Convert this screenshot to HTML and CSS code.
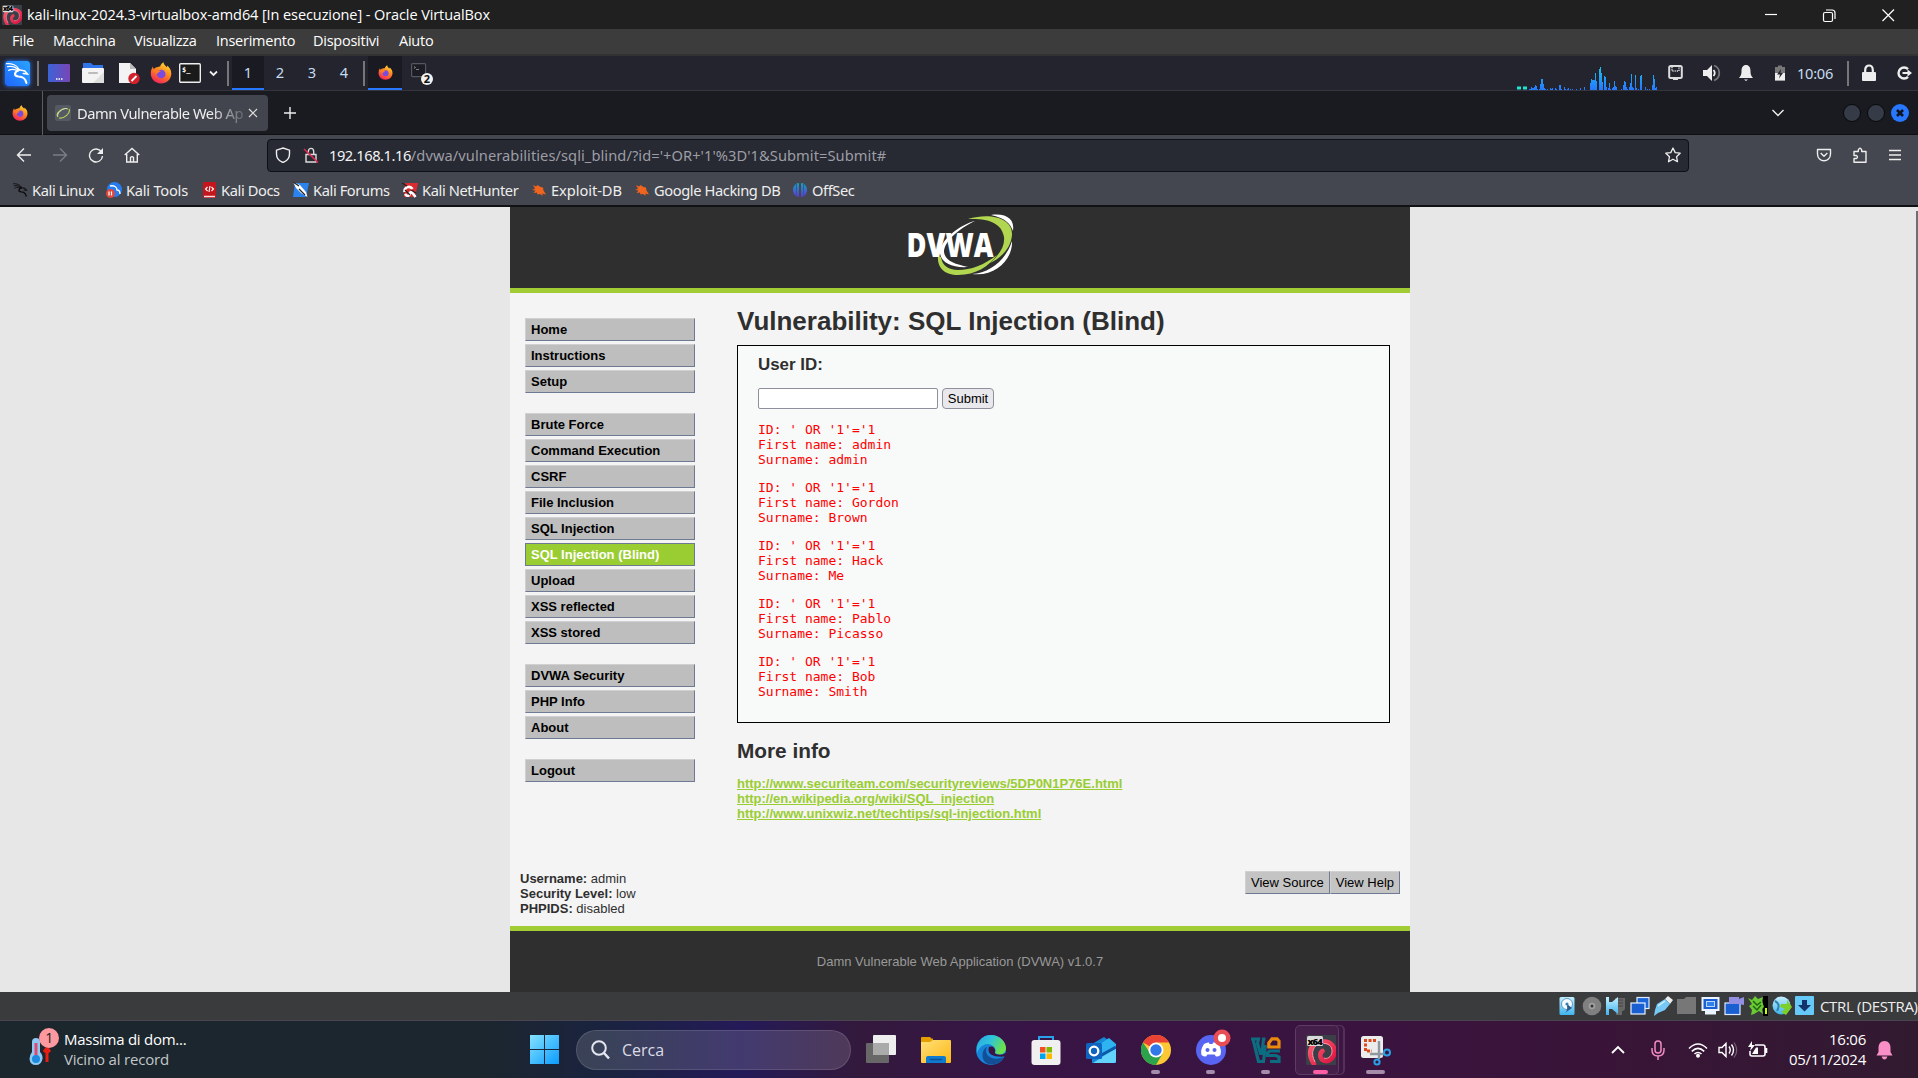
FILE: index.html
```html
<!DOCTYPE html>
<html lang="it">
<head>
<meta charset="utf-8">
<title>kali-linux-2024.3-virtualbox-amd64 [In esecuzione] - Oracle VirtualBox</title>
<link rel="stylesheet" href="styles.css">
</head>
<body>
<svg width="0" height="0" class="defs">
<defs>
<linearGradient id="ffg" x1=".8" y1="0" x2=".3" y2="1"><stop offset="0" stop-color="#ffe03a"/><stop offset=".45" stop-color="#ff8a1e"/><stop offset="1" stop-color="#f4225c"/></linearGradient>
<linearGradient id="desk" x1="0" x2="1"><stop offset="0" stop-color="#3b63d8"/><stop offset="1" stop-color="#7a45b5"/></linearGradient>
<linearGradient id="kg" x1="1" y1="0" x2="0" y2="1"><stop offset="0" stop-color="#2aa3ff"/><stop offset="1" stop-color="#1f67ff"/></linearGradient>
<linearGradient id="cpu" gradientUnits="userSpaceOnUse" x1="0" y1="0" x2="0" y2="24"><stop offset="0" stop-color="#18c8ee"/><stop offset="1" stop-color="#2678ff"/></linearGradient>
<linearGradient id="win" x1="0" y1="0" x2="1" y2="1"><stop offset="0" stop-color="#86e2ff"/><stop offset="1" stop-color="#0a9cff"/></linearGradient>
<linearGradient id="fold" x1="0" y1="0" x2="1" y2="1"><stop offset="0" stop-color="#ffe07a"/><stop offset="1" stop-color="#fcb813"/></linearGradient>
<linearGradient id="edge" x1="0" y1="0" x2="1" y2=".4"><stop offset="0" stop-color="#2ba5e0"/><stop offset=".5" stop-color="#2fc3dd"/><stop offset="1" stop-color="#6be04c"/></linearGradient>
<linearGradient id="aq" x1="0" y1="0" x2="0" y2="1"><stop offset="0" stop-color="#c4eeff"/><stop offset="1" stop-color="#3fb4ee"/></linearGradient>
<linearGradient id="off" x1="0" y1="0" x2="0" y2="1"><stop offset="0" stop-color="#16a3b8"/><stop offset="1" stop-color="#6236d9"/></linearGradient>
<linearGradient id="deb" x1="0" y1="0" x2="1" y2="1"><stop offset="0" stop-color="#ff5f74"/><stop offset="1" stop-color="#d90f3c"/></linearGradient>
<symbol id="firefox" viewBox="0 0 22 22"><path d="M11 21.5C5 21.5.8 17 .8 11.6.8 8 2 6 3 4.6c0 1.2.3 1.8.8 2.3C5.200 5.500 6.500 5 7.500 5.200 8.500 4.500 9.500 4.500 10 4.700 10.500 2.500 12 .8 13.500.2c.2 2.600 2 3.400 3.500 5 .2-.6.1-1.200 0-1.700C19.500 5.500 21.500 8 21.300 12 21 17.500 16.600 21.500 11 21.500Z" fill="url(#ffg)"/><circle cx="11.200" cy="12" r="4.300" fill="#7a4be0"/><path d="M3 8c3-1.500 6 .2 8 1.200-1.500.8-3 .8-3.500 2.300C5 11.500 3.500 10 3 8Z" fill="#ff7a26"/></symbol>
<symbol id="dragon" viewBox="0 0 24 24"><g fill="none" stroke="currentColor" stroke-linecap="round"><path d="M1.500 2.500C6 2 12 4 13.500 8M2.500 5.500C6.500 4.500 10.500 6 13.500 9M3.500 9C7 7 10 8 13 9.500" stroke-width="1.200"/><path d="M13 8.500C8.500 11 8.500 14.500 13 14.800 17.500 15 19.500 16.500 20.500 21" stroke-width="2"/><path d="M13.500 8.500 19 9.500 21.500 12.500 17.500 12" stroke-width="1.500"/></g></symbol>
<symbol id="bug" viewBox="0 0 16 16"><path d="M2 3 5 4.500 6.500 3 9.500 5 12 5.500 12.500 8.500 15 12.500 11 11.500 12 14 9 12 6.500 12.500 6 10.500 2.500 11 4.500 8.500 1 8 4 6.800Z" fill="#f0641e"/></symbol>
<symbol id="debian" viewBox="0 0 30 30"><rect width="30" height="30" rx="1" fill="#3a3f48"/><path d="M8 29C1 19 4 8 14 6.500 23 5.500 29 10 28.500 17 28 24 22 27.500 17.500 25.500 13.500 23.500 13.500 18 16.500 16" fill="none" stroke="url(#deb)" stroke-width="4.600" stroke-linecap="round"/><path d="M9 27C4 18 7 10 15 8.500 22 7.500 26.500 11 26 17 25.500 22 21 24.500 18 23" fill="none" stroke="#ff97a8" stroke-width="1"/><rect x="1" y="1" width="16" height="10" rx="1.500" fill="#d9d9d9"/><text x="1.500" y="9.600" font-family="Open Sans, sans-serif" font-size="9.500" font-weight="800" textLength="15">x64</text></symbol>
</defs>
</svg>

<header class="titlebar">
  <svg class="title-icon" width="20" height="20"><use href="#debian"/></svg>
  <span class="title">kali-linux-2024.3-virtualbox-amd64 [In esecuzione] - Oracle VirtualBox</span>
  <svg class="winbtns" width="132" height="20" fill="none" stroke="#fff" stroke-width="1.200"><path d="M0 9.500H12"/><path d="M58.500 9Q58.500 7.500 60 7.500H66Q67.500 7.500 67.500 9V15Q67.500 16.500 66 16.500H60Q58.500 16.500 58.500 15ZM61 5H67Q70 5 70 8V14"/><path d="M117.500 4.500 129 16M129 4.500 117.500 16"/></svg>
</header>

<nav class="menubar">
  <span>File</span><span>Macchina</span><span>Visualizza</span><span>Inserimento</span><span>Dispositivi</span><span>Aiuto</span>
</nav>

<div class="panel">
  <div class="launchers">
    <svg class="kali" width="25" height="25" viewBox="0 0 24 24" color="#fff"><rect width="24" height="24" rx="2" fill="url(#kg)"/><use href="#dragon"/></svg>
    <i class="sep"></i>
    <svg width="22" height="20"><rect y="1" width="22" height="18" rx="1" fill="url(#desk)"/><path d="M8 16h1.500M10.500 16h1.500M13 16h1.500" stroke="#fff" stroke-width="1.500"/></svg>
    <svg width="22" height="20"><path d="M1 0H9L11 2H21V8H1Z" fill="#2f74e8"/><rect y="5" width="22" height="15" rx="1" fill="#f3f3f3"/><path d="M22 9V20H11Z" fill="#ddd"/><path d="M7 10h8" stroke="#bbb" stroke-width="2" stroke-linecap="round"/></svg>
    <svg width="21" height="22"><path d="M0 1H11L17 7V21H0Z" fill="#f3f3f3"/><path d="M11 1V7H17Z" fill="#bbb"/><circle cx="15" cy="16.500" r="5.700" fill="#d3222c"/><path d="M12.500 19 17.500 14" stroke="#fff" stroke-width="1.800"/></svg>
    <svg width="22" height="22"><use href="#firefox"/></svg>
    <svg width="22" height="20"><rect x=".7" y=".7" width="20.600" height="18.600" rx="1" fill="#1a1a1a" stroke="#eee" stroke-width="1.400"/><text x="3" y="9" font-family="DejaVu Sans Mono, monospace" font-size="7" font-weight="700" fill="#fff">$_</text></svg>
    <svg width="9" height="20"><path d="M1 8.500 4.500 12 8 8.500" fill="none" stroke="#eee" stroke-width="1.800"/></svg>
    <i class="sep"></i>
  </div>
  <div class="spaces"><span class="on">1</span><span>2</span><span>3</span><span>4</span></div>
  <i class="sep"></i>
  <div class="task on"><svg width="15" height="15"><use href="#firefox"/></svg></div>
  <svg class="term2" width="22" height="26"><rect x=".6" y="1.600" width="14" height="13" rx="1" fill="#1c1d24" stroke="#55575e" stroke-width="1.200"/><path d="M3 4.500 4.500 5.500 3 6.500M5 7.500h3" stroke="#999" stroke-width=".8" fill="none"/><circle cx="16" cy="17" r="6" fill="#f2f2f2"/><text x="16" y="21" text-anchor="middle" font-family="Noto Sans, sans-serif" font-size="11" font-weight="700" fill="#111">2</text></svg>
  <svg class="graph" width="141" height="24"><path d="M0 20.500h4v3h-4zM6 20.500h4v3h-4z" fill="#1fe6d2"/><path stroke="url(#cpu)" stroke-width="1" d="M12.500 24v-1M13.500 24v-1M14.500 24v-3M15.500 24v-2M16.500 24v-2M17.500 24v-3M18.500 24v-5M19.500 24v-4M20.500 24v-1M22.500 24v-1M23.500 24v-6M24.500 24v-11M25.500 24v-11M26.500 24v-6M27.500 24v-2M28.500 24v-1M30.500 24v-1M33.500 24v-2M34.500 24v-1M35.500 24v-2M38.500 24v-2M39.500 24v-1M42.500 24v-5M43.500 24v-5M44.500 24v-1M47.500 24v-3M48.500 24v-1M50.500 24v-1M51.500 24v-2M53.500 24v-1M55.500 24v-1M59.500 24v-1M63.500 24v-2M67.500 24v-3M73.500 24v-7M74.500 24v-11M75.500 24v-10M76.500 24v-10M77.500 24v-10M78.500 24v-17M79.500 24v-9M82.500 24v-21M83.500 24v-23M84.500 24v-17M85.500 24v-8M87.500 24v-14M88.500 24v-13M89.500 24v-3M91.500 24v-2M92.500 24v-7M93.500 24v-1M95.500 24v-2M96.500 24v-3M97.500 24v-9M98.500 24v-4M99.500 24v-3M104.500 24v-1M106.500 24v-5M107.500 24v-9M108.500 24v-8M109.500 24v-3M110.500 24v-1M112.500 24v-3M113.500 24v-7M114.500 24v-16M115.500 24v-3M116.500 24v-2M118.500 24v-15M119.500 24v-2M121.500 24v-1M123.500 24v-14M124.500 24v-15M128.500 24v-3M130.500 24v-1M132.500 24v-1M135.500 24v-5M136.500 24v-15M137.500 24v-11M138.500 24v-2M139.500 24v-3"/></svg>
  <div class="tray">
    <svg width="16" height="18"><rect x="1.200" y="2" width="12.600" height="12" rx="1.500" fill="none" stroke="#ddd" stroke-width="2"/><path d="M4 3v4h7V3" fill="none" stroke="#ddd" stroke-width="1.400" stroke-dasharray="1.200 1"/><path d="M5 15h5" stroke="#ddd" stroke-width="2"/></svg>
    <svg width="18" height="18"><path d="M0 6H4L9 1V17L4 12H0Z" fill="#eee"/><path d="M10.500 6Q13 9 10.500 12" fill="none" stroke="#eee" stroke-width="1.800"/><path d="M11 1.500C18 4 18 14 11 16.500" fill="none" stroke="#777" stroke-width="1.800"/></svg>
    <svg width="14" height="18"><path d="M7 1C10 1 11.500 3.500 11.500 7 11.500 11 12.500 12 14 14H0C1.500 12 2.500 11 2.500 7 2.500 3.500 4 1 7 1ZM5 15.500h4L7 17Z" fill="#eee"/></svg>
    <svg width="10" height="18"><path d="M0 3H3V1.500H7V3H10V16.500H0Z" fill="#777"/><path d="M0 9H10V16.500H0Z" fill="#eee"/><path d="M6 5 2 10.500H5L4 14.500 8 9H5.500Z" fill="#23242c"/></svg>
    <span class="clock">10:06</span>
    <i class="sep"></i>
    <svg width="14" height="18"><rect y="8" width="14" height="9" rx="1" fill="#eee"/><path d="M3.200 9V6C3.200 0 10.800 0 10.800 6V9" fill="none" stroke="#eee" stroke-width="2.200"/></svg>
    <svg width="15" height="18"><path d="M11 5.200A5.500 5.500 0 1 0 11 12.800" fill="none" stroke="#eee" stroke-width="2.400"/><path d="M5.500 9H12" stroke="#eee" stroke-width="2"/><path d="M10.500 5.500 15 9 10.500 12.500Z" fill="#eee"/></svg>
  </div>
</div>

<div class="tabs">
  <div class="pin"><svg width="16" height="16"><use href="#firefox"/></svg></div>
  <div class="tab">
    <svg width="16" height="16"><rect width="16" height="16" rx="2" fill="#555961"/><path d="M3 12C0 8 8 2 13 4M4 13C9 14 16 8 14 4" fill="none" stroke="#b4d05a" stroke-width="1.200"/><path d="M2.500 11C3 6 9 3 12 3.500" fill="none" stroke="#ddd" stroke-width=".8"/></svg>
    <span class="tabname">Damn Vulnerable Web Ap</span>
    <svg width="10" height="10"><path d="M1 1 9 9M9 1 1 9" stroke="#ddd" stroke-width="1.200"/></svg>
  </div>
  <svg class="plus" width="14" height="14"><path d="M7 1V13M1 7H13" stroke="#eee" stroke-width="1.400"/></svg>
  <svg class="down" width="14" height="8"><path d="M1.500 1 7 6.500 12.500 1" fill="none" stroke="#eee" stroke-width="1.400"/></svg>
  <i class="dot"></i><i class="dot"></i>
  <svg class="close" width="18" height="18"><circle cx="9" cy="9" r="9" fill="#2777ff"/><path d="M6 6 12 12M12 6 6 12" stroke="#10131c" stroke-width="2.600"/></svg>
</div>

<div class="browserbar">
  <div class="toolbar">
    <div class="navbtns">
      <svg width="16" height="16"><path d="M15 8H1.500M8 1.500 1.500 8 8 14.500" fill="none" stroke="#eee" stroke-width="1.400"/></svg>
      <svg width="16" height="16"><path d="M1 8H14.500M8 1.500 14.500 8 8 14.500" fill="none" stroke="#7b7d83" stroke-width="1.400"/></svg>
      <svg width="16" height="16"><path d="M13.500 5A6.500 6.500 0 1 0 14.500 9" fill="none" stroke="#eee" stroke-width="1.400"/><path d="M15 1V7H9Z" fill="#eee"/></svg>
      <svg width="16" height="16"><path d="M.7 8 8 1.500 15.300 8M2.700 7V15H13.300V7M6.500 15V10.500Q8 8.800 9.500 10.500V15" fill="none" stroke="#eee" stroke-width="1.400"/></svg>
    </div>
    <div class="url">
      <svg width="16" height="16"><path d="M8 1 14.500 3.200V7C14.500 11 12 14 8 15.500 4 14 1.500 11 1.500 7V3.200Z" fill="none" stroke="#eee" stroke-width="1.400"/></svg>
      <svg class="nolock" width="16" height="16"><path d="M3 7.500H13V15H3ZM5.300 7.500V4.500C5.300 .3 10.700 .3 10.700 4.500V7.500" fill="none" stroke="#ddd" stroke-width="1.400"/><path d="M1 2 15 15.500" stroke="#e22850" stroke-width="1.600"/></svg>
      <span class="addr"><b>192.168.1.16</b>/dvwa/vulnerabilities/sqli_blind/?id='+OR+'1'%3D'1&amp;Submit=Submit#</span>
      <svg class="star" width="16" height="16"><path d="M8 1 10.200 5.600 15.200 6.200 11.500 9.700 12.500 14.700 8 12.200 3.500 14.700 4.500 9.700.8 6.200 5.800 5.600Z" fill="none" stroke="#eee" stroke-width="1.300" stroke-linejoin="round"/></svg>
    </div>
    <div class="actions">
      <svg width="16" height="16"><path d="M1.500 2.500H14.500V7C14.500 16 1.500 16 1.500 7ZM4.700 6 8 9.200 11.300 6" fill="none" stroke="#eee" stroke-width="1.400" stroke-linejoin="round"/></svg>
      <svg width="16" height="16"><path d="M2 15.300V11.500H4.500Q6.500 10 4.500 8.500H2V4.500H6.300V3Q8 -.5 9.700 3V4.500H14V15.300Z" fill="none" stroke="#eee" stroke-width="1.400" stroke-linejoin="round"/></svg>
      <svg width="14" height="16"><path d="M1 3.500H13M1 8H13M1 12.500H13" stroke="#eee" stroke-width="1.400"/></svg>
    </div>
  </div>
  <div class="bookmarks">
    <a class="b1"><svg width="17" height="16" viewBox="0 0 24 24" color="#0b0b0d"><use href="#dragon"/></svg><span>Kali Linux</span></a>
    <a class="b2"><svg width="16" height="16"><circle cx="8.500" cy="7.500" r="7.500" fill="#267df0"/><path d="M4 4C8 3 11 5 11 8 13 8 14 10 14 12" stroke="#fff" stroke-width="1.300" fill="none"/><circle cx="4.500" cy="11.500" r="4.500" fill="#e0483c"/><path d="M3 9.500V13.500M5.500 9.500V13.500" stroke="#fff" stroke-width="1.200"/></svg><span>Kali Tools</span></a>
    <a class="b3"><svg width="13" height="16"><rect width="13" height="16" rx="1" fill="#c4161c"/><path d="M1 14.500H12" stroke="#f4dede" stroke-width="1.500"/><path d="M4.500 5 2.500 7 4.500 9M8.500 5 10.500 7 8.500 9M7 4 6 10" stroke="#fff" stroke-width="1.100" fill="none"/></svg><span>Kali Docs</span></a>
    <a class="b4"><svg width="16" height="16"><path d="M2 1H16L13 15H0Z" fill="#2b83ee"/><path d="M0 0 7 3 13 10 14.500 15 8 11 3 6Z" fill="#fff"/><path d="M0 0 6 4M6 7 12 13" stroke="#222" stroke-width="1.200"/></svg><span>Kali Forums</span></a>
    <a class="b5"><svg width="16" height="16"><path d="M3 1H16L13 15H2Z" fill="#d92b30"/><path d="M2.500 10C2 5 8 3 10.500 7M3 12C6 16 9 12 7.500 9.500M9 9 13.500 15" fill="none" stroke="#fff" stroke-width="2.600"/><path d="M0 1 5 4M3 8 8 13M9 8 14 11" stroke="#222" stroke-width="1.300"/></svg><span>Kali NetHunter</span></a>
    <a class="b6"><svg width="16" height="16"><use href="#bug"/></svg><span>Exploit-DB</span></a>
    <a class="b7"><svg width="16" height="16"><use href="#bug"/></svg><span>Google Hacking DB</span></a>
    <a class="b8"><svg width="16" height="16"><path d="M7 1V15C-1 14-1 2 7 1ZM9 1V15C17 14 17 2 9 1Z" fill="url(#off)"/><path d="M4.500 2V14M11.500 2V14" stroke="#2a5a98" stroke-width="1"/></svg><span>OffSec</span></a>
  </div>
</div>

<main class="viewport">
  <div class="dvwa">
    <div class="dv-head">
      <svg class="logo" width="107" height="63"><path d="M60 5C84-2 105 5 104 21 103 34 93 44 82 49 92 40 97 32 96 23 94 9 80 4 60 5Z" fill="#b1d650"/><path d="M30 42C29 54 37 61 50 61 68 61 81 52 89 41 76 51 63 56 50 56 40 56 34 51 33 43Z" fill="#b1d650"/><path d="M83 1C98-1 107 5 105 17 102 9 97 4 83 1Z" fill="#fff"/><path d="M104 27C105 44 89 63 64 60 82 59 98 46 104 27Z" fill="#fff"/><path d="M67 7C50 11 31 28 32 39 33 49 45 54 60 53 47 50 37 47 36 38 36 28 50 15 67 7Z" fill="#fff"/><text x="-1.500" y="43" font-family="Open Sans, sans-serif" font-size="33" font-weight="800" fill="#fff" textLength="87" lengthAdjust="spacingAndGlyphs">DVWA</text></svg>
    </div>
    <div class="dv-main">
      <div class="side">
        <ul><li>Home</li><li>Instructions</li><li>Setup</li></ul>
        <ul><li>Brute Force</li><li>Command Execution</li><li>CSRF</li><li>File Inclusion</li><li>SQL Injection</li><li class="sel">SQL Injection (Blind)</li><li>Upload</li><li>XSS reflected</li><li>XSS stored</li></ul>
        <ul><li>DVWA Security</li><li>PHP Info</li><li>About</li></ul>
        <ul><li>Logout</li></ul>
      </div>
      <div class="body">
        <h1>Vulnerability: SQL Injection (Blind)</h1>
        <div class="vuln">
          <h3>User ID:</h3>
          <form><input type="text"><button type="button">Submit</button></form>
<pre>ID: ' OR '1'='1
First name: admin
Surname: admin</pre>
<pre>ID: ' OR '1'='1
First name: Gordon
Surname: Brown</pre>
<pre>ID: ' OR '1'='1
First name: Hack
Surname: Me</pre>
<pre>ID: ' OR '1'='1
First name: Pablo
Surname: Picasso</pre>
<pre>ID: ' OR '1'='1
First name: Bob
Surname: Smith</pre>
        </div>
        <h2>More info</h2>
        <div class="links"><a>http://www.securiteam.com/securityreviews/5DP0N1P76E.html</a><a>http://en.wikipedia.org/wiki/SQL_injection</a><a>http://www.unixwiz.net/techtips/sql-injection.html</a></div>
      </div>
    </div>
    <div class="dv-info">
      <div><b>Username:</b> admin<br><b>Security Level:</b> low<br><b>PHPIDS:</b> disabled</div>
      <div class="views"><span>View Source</span><span>View Help</span></div>
    </div>
    <div class="dv-foot">Damn Vulnerable Web Application (DVWA) v1.0.7</div>
  </div>
  <i class="scroll"></i>
</main>

<footer class="status">
  <svg width="20" height="20"><rect x="1.500" y="1" width="15" height="18" rx="1.500" fill="url(#aq)"/><circle cx="9" cy="8" r="5.500" fill="#f4fbff" stroke="#4a88b5" stroke-width=".8"/><path d="M9 8 14 12 7 17C10 14 9 12 9 8Z" fill="#2b5d90"/><circle cx="9" cy="8" r="1.600" fill="#3d7fb5"/></svg>
  <svg width="20" height="20"><circle cx="10" cy="10" r="9.300" fill="#808080"/><circle cx="10" cy="10" r="3.300" fill="#a0a0a0"/><circle cx="10" cy="10" r="1.500" fill="#333"/></svg>
  <svg width="20" height="20"><path d="M9 2H19V12Q19 15 16 15V19H10Z" fill="#666"/><path d="M11 4h6M11 7h6M11 10h6" stroke="#444"/><path d="M0 1H3V6H6L12 1V18L6 13H3V19H0Z" fill="url(#aq)"/></svg>
  <svg width="20" height="20"><rect x="7" y="1.500" width="12" height="11" fill="#1a66d8" stroke="#dcecff" stroke-width="1.200"/><rect x="1" y="7" width="14" height="11" fill="#1a5fd2" stroke="#e8f2ff" stroke-width="1.200"/></svg>
  <svg width="20" height="20"><path d="M12 3 15 0 20 4 17 8Z" fill="#eee"/><path d="M4 8 12 3 17 8 12 14 5 17 1 20 2 14Z" fill="#76c8f6"/><path d="M5 10 12 5" stroke="#d6f1ff" stroke-width="1.500"/></svg>
  <svg width="20" height="20"><path d="M0 3H7L9 1H19V18H0Z" fill="#777"/></svg>
  <svg width="20" height="20"><path d="M.5 1H18.500V15H15V18.500H4V15H.5Z" fill="#eaf3ff"/><rect x="2.500" y="3" width="14" height="10" fill="#1a5fd2"/><rect x="5.500" y="5.500" width="8" height="5" fill="#2f80ea" stroke="#bcd8ff" stroke-width="1"/></svg>
  <svg width="20" height="20"><rect x="1" y="7" width="15" height="11.500" fill="#1a5fd2" stroke="#dce8ff" stroke-width="1.200"/><path d="M5 1H15V3L20 1V9L15 8H5Z" fill="#9390e4"/></svg>
  <svg width="20" height="20"><rect x="15" width="5" height="20" fill="#000"/><path d="M17 12h2v6h-2z" fill="#cf0"/><path d="M0 2 4 4 7 0 10 3 15 1 14 5 16 11 14 13 15 18 11 15 6 18 3 19 4 14 1 10 4 8Z" fill="#6bc934"/><path d="M5 5 9 9 13 6M5 10 9 14 13 9" stroke="#1c640f" stroke-width="1.400" fill="none"/></svg>
  <svg width="20" height="20"><circle cx="9.500" cy="9.500" r="9" fill="url(#aq)"/><path d="M3 5Q9 8 5 15" stroke="#2e82b2" stroke-width="2" fill="none"/><path d="M9 8H15V4L20 11 14 19 9 16 13 13 8 11Z" fill="#7cd02b"/></svg>
  <svg width="20" height="20"><rect width="19" height="19" rx="1" fill="#66caf8"/><path d="M7 4H12V9H16L9.500 15.500 3 9H7Z" fill="#14336a"/></svg>
  <span>CTRL (DESTRA)</span>
</footer>

<footer class="taskbar">
  <div class="weather">
    <svg width="31" height="32"><path d="M3 8Q3 4 7 4 11 4 11 8V18Q14 21 13.500 25 12 31 7 31 1 31 .5 25 .5 21 3 18Z" fill="#8cc9f5"/><path d="M7 9V22" stroke="#e3476c" stroke-width="3"/><circle cx="7" cy="25" r="4" fill="#1c8ade"/><path d="M15 18 18 14 21 18M18 17V28" stroke="#e81e14" stroke-width="3" fill="none"/></svg>
    <span class="badge">1</span>
    <div class="wtext"><span>Massima di dom...</span><small>Vicino al record</small></div>
  </div>
  <svg class="start" width="29" height="29"><path d="M0 0H14V14H0ZM15 0H29V14H15ZM0 15H14V29H0ZM15 15H29V29H15Z" fill="url(#win)"/></svg>
  <div class="search"><svg width="19" height="20"><circle cx="8" cy="8" r="6.800" fill="none" stroke="#e6e6f0" stroke-width="2"/><path d="M13 13 18 18.500" stroke="#e6e6f0" stroke-width="2.600"/></svg><span>Cerca</span></div>
  <div class="apps">
    <div><svg width="30" height="30"><rect y="8" width="23" height="20" rx="1" fill="#686868"/><rect x="7" y="0" width="23" height="20" rx="1" fill="#eee"/><path d="M7 8H23V20H7Z" fill="#aaa"/></svg></div>
    <div><svg width="30" height="30"><path d="M0 3Q0 2 1 2H9L12 5V10H0Z" fill="#e5a000"/><rect y="5" width="30" height="23" rx="1" fill="url(#fold)"/><path d="M0 5H10L12 3V5L9 7H0Z" fill="#e5a000"/><path d="M5 28V23Q5 21 7 21H23Q25 21 25 23V28Z" fill="#0f7bd0"/><path d="M9 24.500H21" stroke="#0b4f8f" stroke-width="1.400"/></svg></div>
    <div><svg width="30" height="30"><circle cx="15" cy="15" r="15" fill="#1683d8"/><path d="M1 11C4 2 10 0 15 0 24 0 30 7 30 13 30 19 24 21 19 18 21 14 18 10 12 9 8 9 3 12 1 18Z" fill="url(#edge)"/><path d="M11 12C7 20 16 27 28 22 24 29 15 32 9 27 5 23 6 14 11 12Z" fill="#134f96"/><path d="M13 12C11 18 15 22.500 29 21.500L31 17C25 21.500 18 20 19 17 20 14 17 10 13 12Z" fill="#3a1443"/></svg></div>
    <div><svg width="30" height="30"><path d="M8 7V2H22V7" fill="none" stroke="#2aa0ec" stroke-width="2"/><rect x=".5" y="5" width="29" height="25" rx="3" fill="#f0f0f0"/><path d="M9 12h5.500v5.500H9z" fill="#f25022"/><path d="M15.500 12H21v5.500h-5.500z" fill="#7fba00"/><path d="M9 18.500h5.500V24H9z" fill="#00a4ef"/><path d="M15.500 18.500H21V24h-5.500z" fill="#ffb900"/></svg></div>
    <div><svg width="30" height="30"><path d="M6 9 18 2 30 11V28H6Z" fill="#1487d8"/><path d="M11 11 23 3 30 9V15L14 24Z" fill="#2fb4f2"/><path d="M7 28 30 13V26Q30 28 28 28Z" fill="#62d3fb"/><path d="M12 22 30 12" stroke="#0c5aa6" stroke-width="3"/><rect y="8" width="16" height="16" rx="1.500" fill="#0f64c0"/><circle cx="8" cy="16" r="4.300" fill="none" stroke="#fff" stroke-width="2.300"/></svg></div>
    <div class="run"><svg width="30" height="30"><circle cx="15" cy="15" r="15" fill="#fcc934"/><path d="M15 15 2 7.500A15 15 0 0 1 28 7.500H15Z" fill="#ea4335"/><path d="M2 7.500A15 15 0 0 0 15 30L21.500 18.700 15 15 9 18Z" fill="#2ba24c"/><circle cx="15" cy="15" r="7.500" fill="#fff"/><circle cx="15" cy="15" r="5.700" fill="#3179e8"/></svg></div>
    <div class="run"><svg width="36" height="36" class="disc"><circle cx="15" cy="21" r="15" fill="#5865f2"/><path d="M8 15Q11 13 13 13.500L13.500 15H16.500L17 13.500Q20 13 22.500 15 26 21 24.500 26 22 28 20 27.500L18.500 25.500H11.500L10 27.500Q8 28 5.500 26 4 21 8 15Z" fill="#fff"/><circle cx="11.500" cy="21" r="2" fill="#5865f2"/><circle cx="18.500" cy="21" r="2" fill="#5865f2"/><circle cx="26" cy="9" r="8.500" fill="#ea4e55"/><circle cx="26" cy="9" r="4" fill="#fff"/></svg></div>
    <div class="run"><svg width="30" height="30" fill="none" stroke="#0c6c80" stroke-width="3.200"><path d="M0 4H7.500L6.500 8.500 9.500 18.500H11L12.500 4H14.500M2 4 7.500 26.500H12.500L14.500 10"/><path d="M29 16H18.500L16.500 18V20.500H25L28 22V26.500H19"/><path d="M17.800 12V8L21 3.800H26L28 6V12Z" stroke="#ea8a0c"/></svg></div>
    <div class="run active"><svg width="30" height="30"><use href="#debian"/></svg></div>
    <div class="run wide"><svg width="30" height="32"><rect y="2" width="22" height="22" rx="2.500" fill="#ececec"/><path d="M15 6.500H4.500V17H11" fill="none" stroke="#d94a1d" stroke-width="3" stroke-dasharray="3 1.500"/><path d="M18 7V25M9 20H24" stroke="#8f989f" stroke-width="2.400"/><circle cx="26" cy="18.500" r="3" fill="none" stroke="#2aa0e6" stroke-width="2"/><circle cx="16" cy="28" r="2.600" fill="none" stroke="#2aa0e6" stroke-width="2"/></svg></div>
  </div>
  <div class="systray">
    <svg class="s1" width="14" height="10"><path d="M1 8 7 2 13 8" fill="none" stroke="#fff" stroke-width="1.800"/></svg>
    <svg class="s2" width="14" height="20"><path d="M4 4Q4 1 7 1 10 1 10 4V10Q10 13 7 13 4 13 4 10ZM1 8V10Q1 16 7 16 13 16 13 10V8M7 16V20" fill="none" stroke="#f08bc4" stroke-width="1.500"/></svg>
    <svg class="s3" width="20" height="16"><path d="M1 6.500Q10-2.500 19 6.500M3.800 9.300Q10 3.500 16.200 9.300M6.500 12Q10 9 13.500 12" fill="none" stroke="#fff" stroke-width="1.600"/><circle cx="10" cy="13.800" r="2" fill="#fff"/></svg>
    <svg class="s4" width="20" height="18"><path d="M1 6.500H4L8 2.500V15.500L4 11.500H1ZM11 5.500Q13.500 9 11 12.500M13.500 3.500Q17.500 9 13.500 14.500" fill="none" stroke="#fff" stroke-width="1.400"/><path d="M16 1.500Q21.500 9 16 16.500" fill="none" stroke="#77607a" stroke-width="1.200"/></svg>
    <svg class="s5" width="20" height="18"><path d="M7 4H15Q17 4 17 6V13Q17 15 15 15H4Q2 15 2 13V10M18.500 7V12" fill="none" stroke="#fff" stroke-width="1.600"/><path d="M8 6.500H10V13H4Z" fill="#fff"/><path d="M4 0 0 6H3L2 10 7 4H4Z" fill="#fff"/></svg>
    <div class="dt"><span>16:06</span><span>05/11/2024</span></div>
    <svg width="17" height="20"><path d="M8.500 1C12.500 1 14.500 4 14.500 8V12L16.500 15.500H.5L2.500 12V8C2.500 4 4.500 1 8.500 1ZM5.500 16.500H11.500Q10.500 19.500 8.500 19.500 6.500 19.500 5.500 16.500Z" fill="#f98fc6"/></svg>
  </div>
</footer>
</body>
</html>
```
FILE: styles.css
```css
* { box-sizing: border-box; }
body { margin: 0; width: 1918px; height: 1078px; overflow: hidden; display: flex; flex-direction: column; font-family: "Noto Sans", sans-serif; font-size: 14.67px; color: #eee; background: #1a1b20; }
svg { flex: none; display: block; }
span { white-space: nowrap; }
.defs { position: absolute; }
.sep { flex: none; width: 2px; height: 25px; background: #777; }

.titlebar { height: 29px; flex: none; display: flex; align-items: center; background: #202020; font: 14.5px "Open Sans", sans-serif; letter-spacing: -.09px; color: #fff; }
.title { padding-bottom: 1px; }
.title-icon { margin-left: 2px; margin-right: 5px; }
.winbtns { margin-left: auto; margin-right: 21px; }
.menubar { height: 27px; flex: none; display: grid; grid-template-columns: 41px 81px 82px 97px 86px 60px; align-items: center; padding: 0 0 2px 12px; background: #3c3c3c; border-bottom: 2px solid #333; font: 14.5px "Open Sans", sans-serif; letter-spacing: -.25px; color: #fff; }

.panel { height: 35px; flex: none; display: flex; align-items: center; background: #23242e; border-bottom: 1px solid #34353d; }
.launchers { display: flex; align-items: center; }
.launchers > :nth-child(1) { margin-left: 5px; border-radius: 3px; box-shadow: 0 0 4px #2b7bff; }
.launchers > :nth-child(2) { margin-left: 7px; }
.launchers > :nth-child(3) { margin-left: 9px; }
.launchers > :nth-child(4) { margin-left: 12px; }
.launchers > :nth-child(5) { margin-left: 15px; }
.launchers > :nth-child(6) { margin-left: 10px; }
.launchers > :nth-child(7) { margin-left: 7px; }
.launchers > :nth-child(8) { margin-left: 8px; }
.launchers > :nth-child(9) { margin-left: 9px; }
.spaces { display: flex; height: 34px; margin: 0 3px; width: 128px; color: #c5dcef; }
.spaces span { width: 32px; text-align: center; line-height: 33px; }
.spaces .on, .task.on { background: #1a1b22; border-bottom: 2px solid #2777ff; }
.task { width: 34px; height: 34px; margin-left: 3px; display: flex; align-items: center; justify-content: center; }
.term2 { margin-left: 9px; margin-top: 4px; }
.graph { margin-left: auto; margin-right: 10px; align-self: flex-end; }
.tray { display: flex; align-items: center; width: 250px; }
.tray > :nth-child(2) { margin-left: 19px; }
.tray > :nth-child(3) { margin-left: 18px; }
.tray > :nth-child(4) { margin-left: 22px; }
.clock { margin-left: 12px; width: 38px; color: #c5dcef; letter-spacing: -.3px; }
.tray > .sep { margin-left: 12px; }
.tray > :nth-child(7) { margin-left: 13px; }
.tray > :nth-child(8) { margin-left: 21px; }

.tabs { height: 44px; flex: none; display: flex; align-items: center; background: #1a1b20; border-bottom: 1px solid #0e0f12; }
.pin { width: 43px; height: 44px; padding-left: 12px; border-right: 1px solid #5b5c61; display: flex; align-items: center; }
.tab { width: 221px; height: 36px; margin-left: 4px; padding: 0 10px 0 8px; border-radius: 4px; background: #42454d; display: flex; align-items: center; }
.tabname { width: 167px; margin: 0 4px 0 6px; letter-spacing: -.45px; -webkit-mask-image: linear-gradient(90deg, #000 80%, transparent 104%); mask-image: linear-gradient(90deg, #000 80%, transparent 104%); }
.plus { margin-left: 15px; }
.down { margin-left: auto; margin-right: 58px; }
.dot { width: 18px; height: 18px; margin-right: 6px; border-radius: 50%; background: #363b48; border: 1px solid #08090b; }
.close { margin-right: 9px; }

.browserbar { height: 72px; flex: none; background: #44474f; border-bottom: 2px solid #111216; }
.toolbar { display: flex; align-items: center; height: 40px; }
.navbtns { display: flex; gap: 20px; margin-left: 16px; width: 251px; }
.url { display: flex; align-items: center; width: 1422px; height: 33px; padding: 0 7px 0 7px; border: 1px solid #0f1015; border-radius: 4px; background: #272933; }
.nolock { margin: 0 10px 0 12px; }
.addr { color: #9d9ea5; letter-spacing: .06px; }
.addr b { font-weight: 400; color: #f4f4f4; letter-spacing: -.45px; }
.star { margin-left: auto; }
.actions { display: flex; gap: 20px; margin-left: 127px; }
.bookmarks { display: flex; align-items: center; height: 30px; padding-left: 12px; letter-spacing: -.4px; }
.bookmarks a { display: flex; align-items: center; gap: 4px; }
.bookmarks a:first-child { gap: 3px; }
.b1 { width: 94px; } .b2 { width: 97px; letter-spacing: -.24px; } .b3 { width: 90px; } .b4 { width: 109px; } .b5 { width: 129px; } .b6 { width: 103px; letter-spacing: -.07px; } .b7 { width: 158px; }
.bookmarks .b3 { gap: 5px; }

.viewport { height: 785px; flex: none; display: flex; justify-content: flex-end; background: #e7e7e7; }
.scroll { width: 2px; margin: 4px 0 0 506px; background: #6f6f73; }
.dvwa { width: 900px; display: flex; flex-direction: column; background: #f4f4f4; font: 13px/15px "Liberation Sans", Arial, sans-serif; color: #2f2f2f; }
.dv-head { height: 86px; flex: none; padding: 7px 0 0 398px; background: #2f2f2f; border-bottom: 5px solid #a1cc33; }
.logo { overflow: visible; }
.dv-main { height: 562px; flex: none; display: flex; }
.side { width: 227px; padding: 25px 0 0 15px; }
.side ul { list-style: none; margin: 0 0 20px; padding: 0; display: flex; flex-direction: column; gap: 3px; width: 170px; }
.side li { height: 23px; padding: 4px 0 0 5px; line-height: 14px; font-weight: 700; color: #000; background: #bebebe; border: 1px solid; border-color: #d0d0d0 #6d7a92 #6d7a92 #d0d0d0; }
.side .sel { background: #9acd32; color: #fff; border-color: #6d7a92; }
.body { width: 653px; }
h1 { margin: 13px 0 9px; font-size: 26px; line-height: 30px; }
.vuln { height: 378px; padding: 9px 20px 8px; border: 1px solid #000; background: #f8fafa; }
h3 { margin: 0 0 13px; font-size: 16.9px; line-height: 20px; }
form { display: flex; gap: 4px; margin: 0; }
input { width: 180px; height: 21px; border: 1px solid #8f8f9d; border-radius: 2px; background: #fff; padding: 0; }
button { width: 52px; height: 21px; padding: 0; border: 1px solid #8f8f9d; border-radius: 4px; background: #e9e9ed; font: 13px "Liberation Sans", Arial, sans-serif; color: #000; }
pre { margin: 13px 0; font: 13px/15px "DejaVu Sans Mono", monospace; color: #f00; }
h2 { margin: 16px 0 13px; font-size: 20.8px; line-height: 24px; }
.links { display: flex; flex-direction: column; align-items: flex-start; }
.links a { color: #9acd32; font-weight: 700; text-decoration: underline; }
.dv-info { height: 71px; flex: none; display: flex; justify-content: space-between; align-items: flex-start; padding: 16px 10px 0; }
.views { display: flex; }
.views span { height: 23px; padding: 4px 5px 0; line-height: 14px; color: #000; background: #c4c4c4; border: 1px solid; border-color: #d0d0d0 #6d7a92 #6d7a92 #d0d0d0; }
.dv-foot { flex: 1; background: #2f2f2f; border-top: 5px solid #a1cc33; padding-top: 23px; text-align: center; color: #999; }

.status { height: 28px; flex: none; display: flex; align-items: center; justify-content: flex-end; gap: 3.700px; background: #3a3b3d; font: 15px "Open Sans", sans-serif; letter-spacing: -.33px; }
.status span { width: 98px; margin-left: 1px; }

.taskbar { height: 58px; flex: none; display: flex; align-items: center; border-top: 1px solid #4a4450; font: 15px "Open Sans", sans-serif; letter-spacing: -.26px; color: #fff;
  background: linear-gradient(90deg, #1c262d 0, #1b262e 480px, #1a2340 610px, #241a58 740px, #33193c 860px, #371546 1000px, #3a1440 1300px, #391438 1600px, #311a30 1918px); }
.weather { position: relative; width: 501px; padding-left: 29px; display: flex; align-items: center; gap: 4px; }
.badge { position: absolute; left: 39px; top: -3px; width: 20px; height: 20px; border-radius: 50%; background: #ff99a0; color: #222; text-align: center; font-size: 14px; line-height: 20px; }
.wtext { display: flex; flex-direction: column; line-height: 20px; margin-top: -2px; }
.wtext small { font-size: 15px; color: #c2c6c9; letter-spacing: -.18px; }
.start { margin-left: 29px; }
.search { width: 275px; height: 40px; margin-left: 17px; padding-left: 14px; display: flex; align-items: center; gap: 12px; border-radius: 20px; background: rgba(255,255,255,.14); border: 1px solid rgba(255,255,255,.12); font-size: 16px; letter-spacing: 0; color: #dcdce6; }
.apps { display: flex; margin-left: 2px; }
.apps div { position: relative; width: 55px; height: 50px; display: flex; align-items: center; justify-content: center; }
.disc { margin: -6px -6px 0 0; }
.run::after { content: ""; position: absolute; left: 23px; bottom: 1px; width: 9px; height: 4px; border-radius: 2px; background: #a68cab; }
.active::before { content: ""; position: absolute; inset: 0 9px 0 2px; border: 1px solid #5d3b63; border-radius: 5px; background: rgba(255,255,255,.05); box-shadow: 5px 0 0 -1px #3c1741, 6px 0 0 0 #54305a; }
.active svg { position: relative; }
.run.active::after { left: 20px; width: 15px; background: #ff5da5; }
.run.wide::after { left: 18px; width: 19px; }
.systray { margin-left: auto; margin-right: 25px; display: flex; align-items: center; }
.s1 { margin-right: 26px; } .s2 { margin-right: 23px; } .s3 { margin-right: 10px; } .s4 { margin-right: 10px; }
.dt { width: 98px; margin: -2px 10px 0 0; line-height: 20px; display: flex; flex-direction: column; align-items: flex-end; }
```
